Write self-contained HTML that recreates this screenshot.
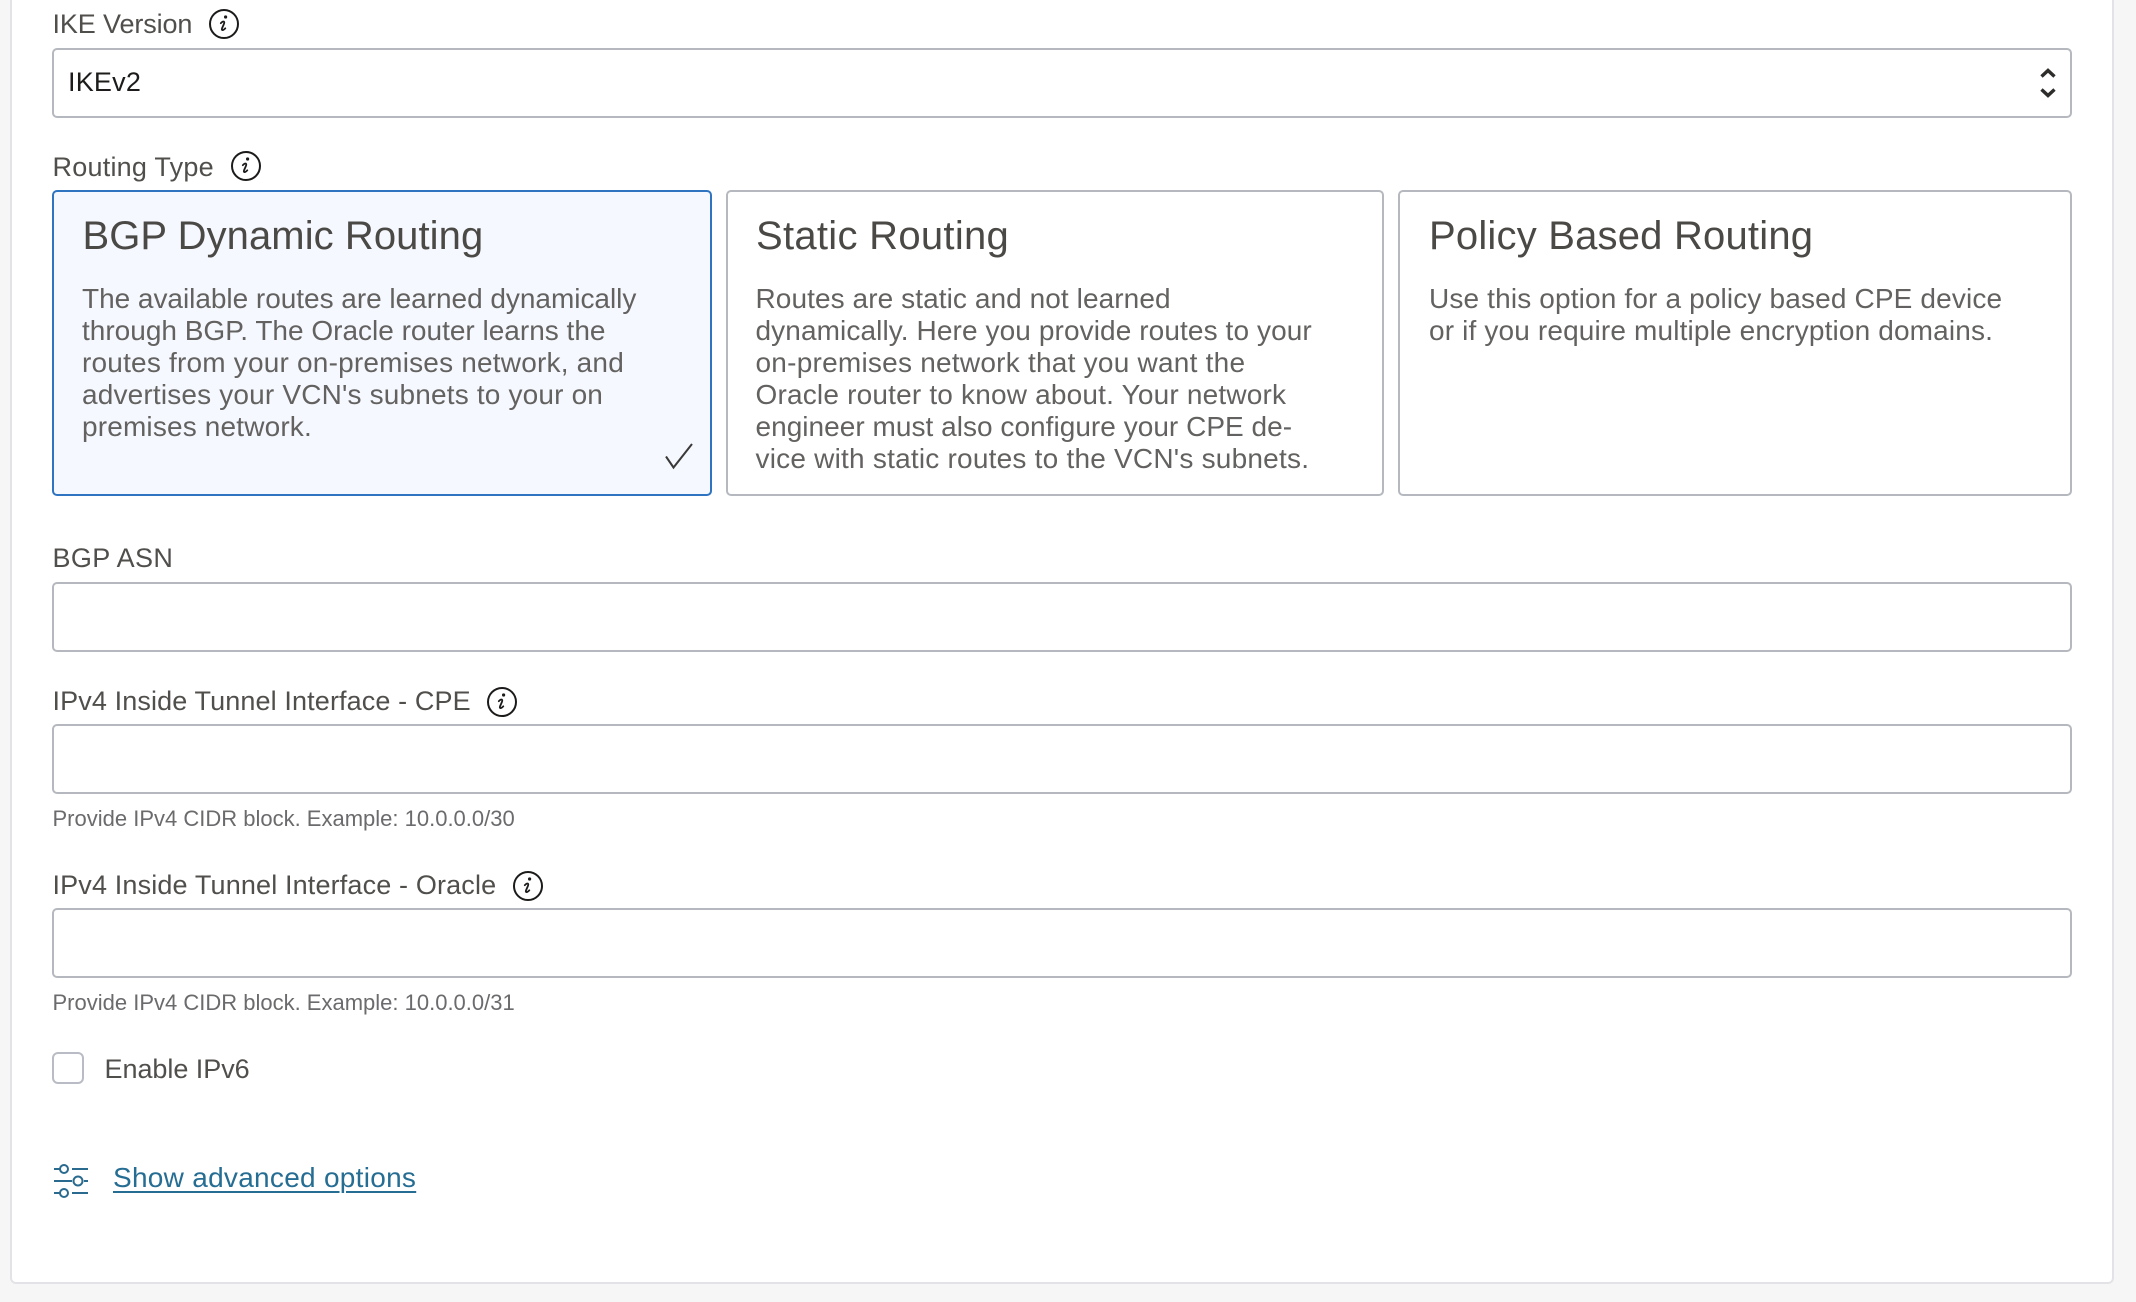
<!DOCTYPE html>
<html lang="en">
<head>
<meta charset="utf-8">
<title>IPSec Tunnel Options</title>
<style>
html,body{margin:0;padding:0}
body{width:2136px;height:1302px;background:#f6f6f6;position:relative;overflow:hidden;font-family:"Liberation Sans",Arial,sans-serif}
.panel{position:absolute;left:10px;top:-10px;width:2104px;height:1294px;box-sizing:border-box;background:#fff;border:2px solid #e3e3e7;border-radius:6px}
.abs{position:absolute;white-space:nowrap}
.label{font-size:27px;line-height:32px;color:#514f4c}
.hint{font-size:22px;line-height:28px;color:#6b6a6d}
.field{position:absolute;left:52px;width:2020px;height:70px;box-sizing:border-box;background:#fff;border:2px solid #b5b9bf;border-radius:5px}
.card{position:absolute;top:190px;height:306px;box-sizing:border-box;background:#fff;border:2px solid #b5b9bf;border-radius:5px}
.card.sel{background:#f5f8fe;border-color:#2f74c0}
.title{position:absolute;font-size:40px;line-height:48px;top:212px;color:#4b4946;white-space:nowrap}
.body{position:absolute;font-size:28px;line-height:32px;top:283px;color:#636260;white-space:nowrap}
svg{position:absolute;overflow:visible}
a{position:absolute;left:113px;top:1162px;font-size:28px;line-height:32px;letter-spacing:.28px;color:#266d93;text-decoration:underline;text-decoration-thickness:2px;text-underline-offset:4px;white-space:nowrap}
</style>
</head>
<body>
<div class="panel"></div>

<div class="abs label" style="left:52.500px;top:8px;letter-spacing:-.12px">IKE Version</div>
<svg style="left:209px;top:9px" width="30" height="30" viewBox="0 0 30 30"><circle cx="15" cy="15" r="14" fill="none" stroke="#1c1b1a" stroke-width="2"/><circle cx="16.600" cy="8" r="1.600" fill="#1c1b1a"/><path d="M11.800 14.200c1.200-1.300 2.500-1.900 3.200-1.500.6.4.3 1.400-.3 2.800l-1.700 3.900c-.5 1.300.1 2 1.200 1.500.7-.3 1.500-.9 2.100-1.600" fill="none" stroke="#1c1b1a" stroke-width="1.800" stroke-linecap="round"/></svg>
<div class="field" style="top:48px"></div>
<div class="abs" style="left:68px;top:66px;font-size:27px;line-height:32px;letter-spacing:.2px;color:#1d1c1b">IKEv2</div>
<svg style="left:2040px;top:68px" width="16" height="30" viewBox="0 0 16 30"><path d="M1.500 8.500 8 2.500l6.500 6M1.500 21.500 8 27.500l6.500-6" fill="none" stroke="#2e2d2c" stroke-width="3.400"/></svg>

<div class="abs label" style="left:52.500px;top:151px;letter-spacing:.23px">Routing Type</div>
<svg style="left:231px;top:151px" width="30" height="30" viewBox="0 0 30 30"><circle cx="15" cy="15" r="14" fill="none" stroke="#1c1b1a" stroke-width="2"/><circle cx="16.600" cy="8" r="1.600" fill="#1c1b1a"/><path d="M11.800 14.200c1.200-1.300 2.500-1.900 3.200-1.500.6.4.3 1.400-.3 2.800l-1.700 3.900c-.5 1.300.1 2 1.200 1.500.7-.3 1.500-.9 2.100-1.600" fill="none" stroke="#1c1b1a" stroke-width="1.800" stroke-linecap="round"/></svg>

<div class="card sel" style="left:52px;width:660px"></div>
<div class="title" style="left:82.500px;letter-spacing:.07px">BGP Dynamic Routing</div>
<div class="body" style="left:82px"><span style="letter-spacing:-.03px">The available routes are learned dynamically</span><br>through BGP. The Oracle router learns the<br><span style="letter-spacing:.2px">routes from your on-premises network, and</span><br><span style="letter-spacing:.17px">advertises your VCN's subnets to your on</span><br><span style="letter-spacing:.16px">premises network.</span></div>
<svg style="left:664px;top:442px" width="30" height="28" viewBox="0 0 30 28"><path d="M2 14.500 9.500 25.500 28 2" fill="none" stroke="#3a3938" stroke-width="2"/></svg>

<div class="card" style="left:726px;width:658px"></div>
<div class="title" style="left:756px;letter-spacing:.29px">Static Routing</div>
<div class="body" style="left:755.500px"><span style="letter-spacing:.08px">Routes are static and not learned</span><br><span style="letter-spacing:.1px">dynamically. Here you provide routes to your</span><br><span style="letter-spacing:.24px">on-premises network that you want the</span><br><span style="letter-spacing:.19px">Oracle router to know about. Your network</span><br><span style="letter-spacing:.03px">engineer must also configure your CPE de-</span><br><span style="letter-spacing:.22px">vice with static routes to the VCN's subnets.</span></div>

<div class="card" style="left:1398px;width:674px"></div>
<div class="title" style="left:1429px;letter-spacing:.2px">Policy Based Routing</div>
<div class="body" style="left:1429px"><span style="letter-spacing:.15px">Use this option for a policy based CPE device</span><br><span style="letter-spacing:.15px">or if you require multiple encryption domains.</span></div>

<div class="abs label" style="left:52.500px;top:542px;letter-spacing:.39px">BGP ASN</div>
<div class="field" style="top:582px"></div>

<div class="abs label" style="left:52.500px;top:685px;letter-spacing:.12px">IPv4 Inside Tunnel Interface - CPE</div>
<svg style="left:487px;top:687px" width="30" height="30" viewBox="0 0 30 30"><circle cx="15" cy="15" r="14" fill="none" stroke="#1c1b1a" stroke-width="2"/><circle cx="16.600" cy="8" r="1.600" fill="#1c1b1a"/><path d="M11.800 14.200c1.200-1.300 2.500-1.900 3.200-1.500.6.4.3 1.400-.3 2.800l-1.700 3.900c-.5 1.300.1 2 1.200 1.500.7-.3 1.500-.9 2.100-1.600" fill="none" stroke="#1c1b1a" stroke-width="1.800" stroke-linecap="round"/></svg>
<div class="field" style="top:724px"></div>
<div class="abs hint" style="left:52.500px;top:805px">Provide IPv4 CIDR block. Example: 10.0.0.0/30</div>

<div class="abs label" style="left:52.500px;top:869px;letter-spacing:.15px">IPv4 Inside Tunnel Interface - Oracle</div>
<svg style="left:513px;top:871px" width="30" height="30" viewBox="0 0 30 30"><circle cx="15" cy="15" r="14" fill="none" stroke="#1c1b1a" stroke-width="2"/><circle cx="16.600" cy="8" r="1.600" fill="#1c1b1a"/><path d="M11.800 14.200c1.200-1.300 2.500-1.900 3.200-1.500.6.4.3 1.400-.3 2.800l-1.700 3.900c-.5 1.300.1 2 1.200 1.500.7-.3 1.500-.9 2.100-1.600" fill="none" stroke="#1c1b1a" stroke-width="1.800" stroke-linecap="round"/></svg>
<div class="field" style="top:908px"></div>
<div class="abs hint" style="left:52.500px;top:989px">Provide IPv4 CIDR block. Example: 10.0.0.0/31</div>

<div class="abs" style="left:52px;top:1052px;width:32px;height:32px;box-sizing:border-box;border:2px solid #b9bcc4;border-radius:6px;background:#fff"></div>
<div class="abs label" style="left:104.500px;top:1053px;letter-spacing:-.04px">Enable IPv6</div>

<svg style="left:54px;top:1163px" width="34" height="36" viewBox="0 0 34 36"><g fill="none" stroke="#2a6a8e" stroke-width="2"><path d="M0 6h6M18 6h16M0 18h18M30 18h4M0 30h6M18 30h16"/><circle cx="10" cy="6" r="4"/><circle cx="24" cy="18" r="4.500"/><circle cx="10" cy="30" r="4"/></g></svg>
<a href="#">Show advanced options</a>
</body>
</html>
